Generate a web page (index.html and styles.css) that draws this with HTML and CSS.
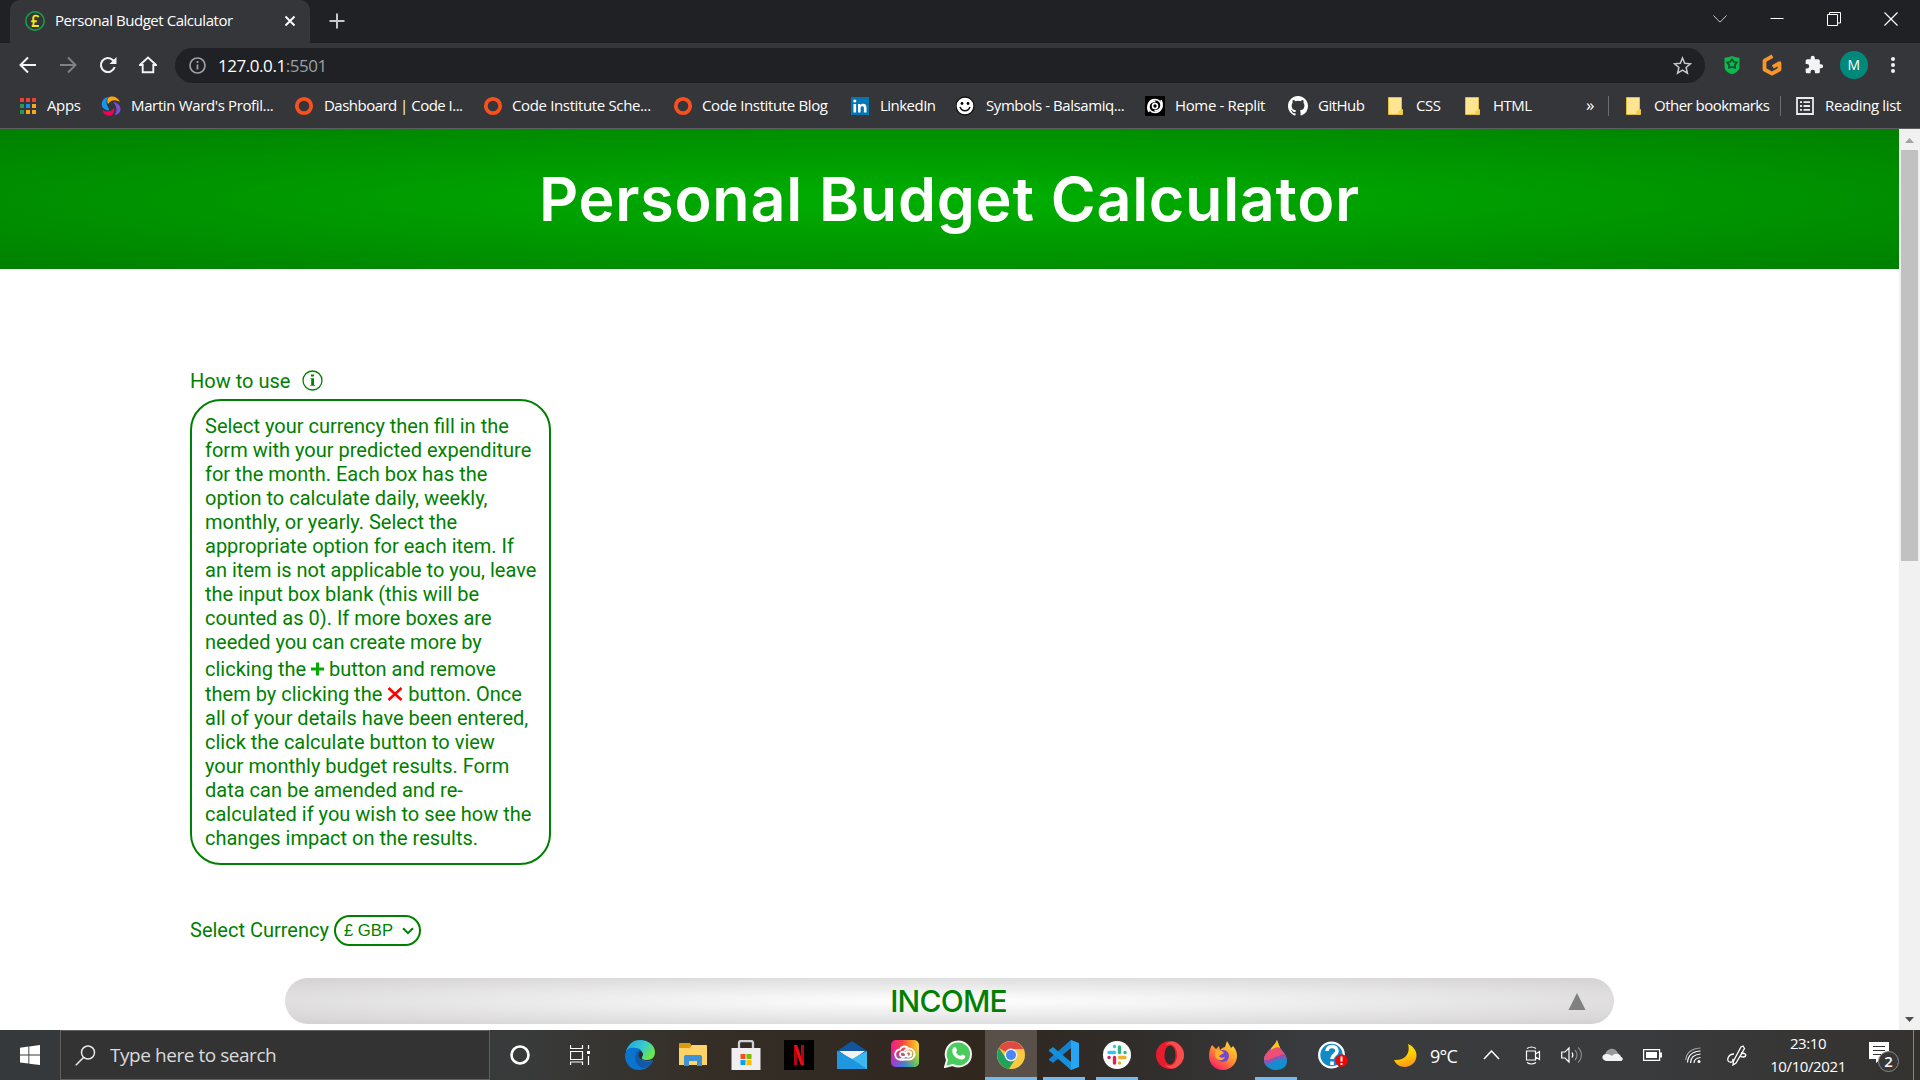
FILE: index.html
```html
<!DOCTYPE html>
<html lang="en">
<head>
<meta charset="utf-8">
<title>Personal Budget Calculator</title>
<link rel="stylesheet" href="styles.css">
</head>
<body>
<svg width="0" height="0" class="defs">
  <defs>
    <symbol id="ring" viewBox="0 0 20 20"><circle cx="10" cy="10" r="7.2" fill="none" stroke="#f9501f" stroke-width="3.8"/></symbol>
    <symbol id="folder" viewBox="0 0 20 20"><path d="M2.5 1.5h13v12h1v5h-14z" fill="#ffe592" stroke="#e3bb3d" stroke-width="1"/><path d="M12.500 18.500v-3.500l3-1.500h1v5z" fill="#f4cd4f"/></symbol>
  </defs>
</svg>
<div class="screen">
  <header class="tabs">
    <div class="tab">
      <svg width="20" height="20" viewBox="0 0 20 20"><circle cx="10" cy="10" r="9.200" fill="none" stroke="#16a34a" stroke-width="1.500"/><path d="M13.500 6.300C12.800 3.900 8.200 3.900 8.200 7.400c0 2 1 4 .2 6.200-.4.900-1 1.400-1.700 1.400h7.200M6.200 10.200h5.600" fill="none" stroke="#f3e90e" stroke-width="1.900"/></svg>
      <span class="tab-title">Personal Budget Calculator</span>
      <svg width="12" height="12" viewBox="0 0 12 12"><path d="M1.500 1.500l9 9M10.500 1.500l-9 9" stroke="#fff" stroke-width="1.900"/></svg>
    </div>
    <svg class="new-tab" width="16" height="16" viewBox="0 0 16 16"><path d="M8 .5v15M.5 8h15" stroke="#c7c8ca" stroke-width="2"/></svg>
    <div class="window-buttons">
      <svg width="14" height="8" viewBox="0 0 14 8"><path d="M.5.5L7 7.200 13.500.5" fill="none" stroke="#c4c4c4" stroke-width="1"/></svg>
      <svg width="14" height="13" viewBox="0 0 14 13"><path d="M.5 6.500h13" stroke="#fff"/></svg>
      <svg width="14" height="14" viewBox="0 0 14 14"><path d="M.5 2.500h10v11H.5zM2.500 2.500v-2h11v10.500h-2.500" fill="none" stroke="#fff"/></svg>
      <svg width="14" height="14" viewBox="0 0 14 14"><path d="M.5.5l13 13M13.500.5l-13 13" stroke="#fff" stroke-width="1.200"/></svg>
    </div>
  </header>

  <nav class="toolbar">
    <div class="nav-icons">
      <svg width="18" height="18" viewBox="0 0 18 18"><path d="M17 9H2M9 1.500L1.500 9 9 16.500" fill="none" stroke="#f1f3f4" stroke-width="2"/></svg>
      <svg width="18" height="18" viewBox="0 0 18 18"><path d="M1 9h15M9 1.500L16.500 9 9 16.500" fill="none" stroke="#7f8184" stroke-width="2"/></svg>
      <svg width="18" height="18" viewBox="0 0 18 18"><path d="M15.600 11A7 7 0 1 1 14 4.200l1.500 1.600" fill="none" stroke="#f1f3f4" stroke-width="2.100"/><path d="M17.500 1v7h-7z" fill="#f1f3f4"/></svg>
      <svg width="18" height="18" viewBox="0 0 18 18"><path d="M.9 9L9 1.500 17.100 9H14.300v7.200H3.700V9z" fill="none" stroke="#f1f3f4" stroke-width="1.900"/></svg>
    </div>
    <div class="omnibox">
      <svg width="17" height="17" viewBox="0 0 17 17"><circle cx="8.500" cy="8.500" r="7.500" fill="none" stroke="#9aa0a6" stroke-width="1.700"/><path d="M8.500 7.500v5M8.500 4v2" stroke="#9aa0a6" stroke-width="1.800"/></svg>
      <span class="url">127.0.0.1<span class="port">:5501</span></span>
      <svg class="star" width="19" height="19" viewBox="0 0 19 19"><path d="M9.500 2l2.200 5.300 5.700.5-4.300 3.700 1.300 5.600-4.900-3-4.900 3 1.300-5.600L1.600 7.800l5.700-.5z" fill="none" stroke="#c6c8ca" stroke-width="1.500"/></svg>
    </div>
    <div class="extensions">
      <svg width="18" height="20" viewBox="0 0 18 20"><path d="M9 1c3 1.200 5 1.600 7.500 1.800v8.700c0 3.800-3 6.200-7.500 7.800-4.500-1.600-7.500-4-7.500-7.800V2.800C4 2.600 6 2.200 9 1z" fill="#0bba4b"/><path d="M9 4.300l1.800 2.400 2.900.8-1.800 2.400.1 3-3-.9-2.900.9v-3L4.300 7.500l3-.8z" fill="none" stroke="#165335" stroke-width="1.800"/></svg>
      <svg width="20" height="22" viewBox="0 0 20 22"><path d="M10.500 2.200L2.500 6.600v8.900l7.500 4.200 7.500-4.200V9.200l-6.700 3.700" fill="none" stroke="#f9962b" stroke-width="3.800" stroke-linejoin="round"/></svg>
      <svg width="20" height="20" viewBox="0 0 24 24"><path fill="#f1f3f4" d="M20.500 11H19V7a2 2 0 0 0-2-2h-4V3.500a2.500 2.500 0 0 0-5 0V5H4a2 2 0 0 0-2 2v3.800h1.500a2.700 2.700 0 0 1 0 5.400H2V20a2 2 0 0 0 2 2h3.800v-1.500a2.700 2.700 0 0 1 5.400 0V22H17a2 2 0 0 0 2-2v-4h1.500a2.500 2.500 0 0 0 0-5z"/></svg>
      <span class="avatar">M</span>
      <svg width="6" height="18" viewBox="0 0 6 18"><g fill="#f1f3f4"><circle cx="3" cy="3" r="2"/><circle cx="3" cy="9" r="2"/><circle cx="3" cy="15" r="2"/></g></svg>
    </div>
  </nav>

  <nav class="bookmarks">
    <a class="bm apps"><svg width="18" height="18" viewBox="0 0 18 18"><path d="M1 1h4v4H1zM7 1h4v4H7zM13 1h4v4h-4z" fill="#ea4335"/><path d="M1 7h4v4H1zM1 13h4v4H1z" fill="#23995a"/><path d="M7 7h4v4H7z" fill="#1a8cf0"/><path d="M13 7h4v4h-4zM7 13h4v4H7zM13 13h4v4h-4z" fill="#f7a81b"/></svg><span>Apps</span></a>
    <a class="bm martin"><svg width="20" height="20" viewBox="0 0 20 20"><path d="M7 1C2 2 0 6 1 10c.5 2.500 2.500 3 4.500 4 2 1 3.500 0 2-2C5.500 9 4.500 5 7 1z" fill="#1496ea"/><path d="M7 2c4-3 10-1 12 4-4-2-8-3-12 2-1-2-1-4 0-6z" fill="#fda50f"/><path d="M12 6c5 .5 8 4 7.500 8-.5 2.500-3 5-5.500 5 2-4 2.500-8-2-13z" fill="#7950d8"/><path d="M1.500 14C6 16.500 10 16 13 12c1 3 0 6-3 7.500-4 .7-8-1.500-8.500-5.500z" fill="#f50057"/></svg><span>Martin Ward's Profil...</span></a>
    <a class="bm dash"><svg width="20" height="20"><use href="#ring"/></svg><span>Dashboard | Code I...</span></a>
    <a class="bm sche"><svg width="20" height="20"><use href="#ring"/></svg><span>Code Institute Sche...</span></a>
    <a class="bm blog"><svg width="20" height="20"><use href="#ring"/></svg><span>Code Institute Blog</span></a>
    <a class="bm linked"><svg width="20" height="20" viewBox="0 0 20 20"><path d="M1 1h18v18H1z" fill="#0277b5"/><path d="M3.500 8h2.600v8.500H3.500zM8 8h2.500v1.200c1.500-2.300 6-1.900 6 2.200v5.100h-2.600v-4.600c0-2.300-3.300-2.200-3.300 0v4.600H8z" fill="#fff"/><circle cx="4.800" cy="5" r="1.600" fill="#fff"/></svg><span>LinkedIn</span></a>
    <a class="bm symb"><svg width="20" height="20" viewBox="0 0 20 20"><circle cx="9" cy="10" r="9" fill="#fff" stroke="#111" stroke-width="1.300"/><path d="M4 11c2 5 8 5 10 0" fill="none" stroke="#111" stroke-width="1.600"/><circle cx="6" cy="7.500" r="1.400"/><circle cx="12" cy="7.500" r="1.400"/></svg><span>Symbols - Balsamiq...</span></a>
    <a class="bm replit"><svg width="20" height="20" viewBox="0 0 20 20"><rect width="20" height="20" rx="1"/><g fill="none" stroke="#fff" stroke-width="1.600"><circle cx="10" cy="10" r="2.500"/><path d="M4 16C1 10 4 3.500 10 3.500c4 0 6.500 3 6 6.500-.4 3-3 5-6.500 4.500M16 4c3 6 0 12.500-6 12.500-4 0-6.500-3-6-6.500.4-3 3-5 6.500-4.500"/></g></svg><span>Home - Replit</span></a>
    <a class="bm github"><svg width="20" height="20" viewBox="0 0 16 16"><path fill="#fff" d="M8 0C3.580 0 0 3.580 0 8c0 3.540 2.290 6.530 5.470 7.590.4.070.55-.17.55-.38v-1.490c-2.010.37-2.530-.49-2.690-.94-.09-.23-.48-.94-.82-1.130-.28-.15-.68-.52-.01-.53.63-.01 1.080.58 1.230.82.720 1.210 1.870.87 2.330.66.070-.52.280-.87.510-1.070-1.780-.2-3.640-.89-3.640-3.950 0-.87.310-1.590.82-2.150-.08-.2-.36-1.020.08-2.120 0 0 .67-.21 2.200.82a7.600 7.600 0 0 1 4 0c1.530-1.040 2.200-.82 2.200-.82.440 1.100.16 1.920.08 2.120.51.560.82 1.270.82 2.150 0 3.070-1.870 3.750-3.650 3.950.29.250.54.730.54 1.480v2.200c0 .21.15.46.55.38A8 8 0 0 0 16 8c0-4.420-3.580-8-8-8z"/></svg><span>GitHub</span></a>
    <a class="bm css"><svg width="20" height="20"><use href="#folder"/></svg><span>CSS</span></a>
    <a class="bm html"><svg width="20" height="20"><use href="#folder"/></svg><span>HTML</span></a>
    <a class="bm more">»</a>
    <a class="bm other"><svg width="20" height="20"><use href="#folder"/></svg><span>Other bookmarks</span></a>
    <a class="bm reading"><svg width="18" height="18" viewBox="0 0 18 18"><path d="M1 1h16v16H1z" fill="none" stroke="#e8eaed" stroke-width="1.800"/><path d="M4 5.200h2M4 9h2M4 12.800h2M7.500 5.200H14M7.500 9H14M7.500 12.800H14" stroke="#e8eaed" stroke-width="1.800"/></svg><span>Reading list</span></a>
  </nav>

  <div class="viewport">
    <main class="page">
      <div class="banner"><h1>Personal Budget Calculator</h1></div>
      <section class="help">
        <div class="how">How to use
          <svg width="21" height="21" viewBox="0 0 21 21"><circle cx="10.500" cy="10.500" r="9.500" fill="none" stroke="green" stroke-width="1.300"/><path d="M8.500 8.300h3.500v6.700h1v.8H8.200V15h1V9.100h-.7z" fill="green"/><path d="M9 4.500h3v2H9z" fill="green"/></svg>
        </div>
        <p class="instructions">Select your currency then fill in the<br>form with your predicted expenditure<br>for the month. Each box has the<br>option to calculate daily, weekly,<br>monthly, or yearly. Select the<br>appropriate option for each item. If<br>an item is not applicable to you, leave<br>the input box blank (this will be<br>counted as 0). If more boxes are<br>needed you can create more by<br><span class="plus-line">clicking the <svg width="13" height="14" viewBox="0 0 13 14"><path d="M6.500 .5v13M0 7h13" stroke="#0a0" stroke-width="3"/></svg> button and remove</span><br><span class="cross-line">them by clicking the <svg width="16" height="14" viewBox="0 0 16 14"><path d="M1.500 1l13 12M14.500 1l-13 12" stroke="red" stroke-width="2.600"/></svg> button. Once</span><br>all of your details have been entered,<br>click the calculate button to view<br>your monthly budget results. Form<br>data can be amended and re-<br>calculated if you wish to see how the<br>changes impact on the results.</p>
        <div class="currency">
          <span>Select Currency</span>
          <div class="select">£ GBP<svg width="12" height="8" viewBox="0 0 12 8"><path d="M1 1.200l5 5 5-5" fill="none" stroke="green" stroke-width="2"/></svg></div>
        </div>
      </section>
      <div class="income"><h2>INCOME</h2><svg width="18" height="17" viewBox="0 0 18 17"><path d="M9 0l8.500 17H.5z" fill="gray"/></svg></div>
    </main>
    <div class="scrollbar">
      <svg width="21" height="21" viewBox="0 0 21 21"><path d="M6 14l4.500-5 4.500 5z" fill="#a3a3a3"/></svg>
      <div class="thumb"></div>
      <svg class="down" width="21" height="21" viewBox="0 0 21 21"><path d="M6 8l4.500 5L15 8z" fill="#505050"/></svg>
    </div>
  </div>

  <footer class="taskbar">
    <div class="start"><svg width="20" height="20" viewBox="0 0 20 20"><path d="M0 2.800l8.400-1.200v8H0zM9.300 1.400L20 0v9.600H9.300zM0 10.500h8.400v8.100L0 17.400zM9.300 10.500H20V20L9.300 18.700z" fill="#fff"/></svg></div>
    <div class="search"><svg width="21" height="21" viewBox="0 0 21 21"><circle cx="13" cy="7.500" r="6.500" fill="none" stroke="#e8e8e8" stroke-width="1.500"/><path d="M8.500 12.500L.8 20.200" stroke="#e8e8e8" stroke-width="1.600"/></svg><span>Type here to search</span></div>
    <div class="task cortana"><svg width="20" height="20" viewBox="0 0 20 20"><circle cx="10" cy="10" r="8.500" fill="none" stroke="#fff" stroke-width="2.600"/></svg></div>
    <div class="task view"><svg width="20" height="20" viewBox="0 0 20 20"><path d="M.5 0v3.500h12V0M.5 6.500h12v8H.5zM.5 20v-3h12v3M18.500 0v4M18.500 11v9" fill="none" stroke="#fff" stroke-width="1.200"/><path d="M17 6h3v3h-3z" fill="#fff"/></svg></div>

    <div class="task"><svg width="30" height="30" viewBox="0 0 30 30"><defs><linearGradient id="e1" x2="1" y2=".5"><stop stop-color="#229fe0"/><stop offset=".6" stop-color="#37cbd0"/><stop offset="1" stop-color="#6be64d"/></linearGradient></defs><path d="M1 11C4 3 9 0 15 0c9 0 15 6 15 12 0 5-3 8-8 8-4 0-6-1.500-5-3 2-3 0-7-4-7z" fill="url(#e1)"/><path d="M0 15C1 8 6 7 11 8c5 0 8 5 6 8-2 2 1 5 5 5 3 0 5-1 6-1-3 7-8 10-14 10C6 30 0 24 0 15z" fill="#0b74cf"/><path d="M10 17c0-4 3-7 5-7 3 2 3 5 2 6-2 3 1 6 6 6 3 0 4-1 5-1-2 5-6 7-9 7-5 0-9-5-9-11z" fill="#125aa9"/><path d="M15 11.500c3 .5 3.500 3 2 5-1 1.500-.5 2.500.5 3.300-2-.3-3.500-2-3.800-3.800-.3-2 .3-3.500 1.300-4.500z" fill="#2f2c27"/></svg></div>
    <div class="task"><svg width="30" height="30" viewBox="0 0 30 30"><path d="M1 4c0-1 .5-1 1-1h10l2 3v5H1z" fill="#dd9b13"/><path d="M1 8h11l2-3h14c.6 0 1 .4 1 1v19H1z" fill="#ffd466"/><path d="M6 26V17c0-1.500 1-2 2-2h14c1 0 2 .5 2 2v9h-5v-5h-8v5z" fill="#3e92d6"/></svg></div>
    <div class="task"><svg width="30" height="30" viewBox="0 0 30 30"><path d="M8 11V3c0-1.500 1-2 2-2h10c1 0 2 .5 2 2v8" fill="none" stroke="#d2cfd2" stroke-width="2.300"/><path d="M.5 8h29v22h-29z" fill="#f0eef0"/><path d="M9.500 14h5v5h-5z" fill="#f25022"/><path d="M15.500 14h5v5h-5z" fill="#7fba00"/><path d="M9.500 20h5v5h-5z" fill="#00a4ef"/><path d="M15.500 20h5v5h-5z" fill="#ffb900"/></svg></div>
    <div class="task"><svg width="30" height="30" viewBox="0 0 30 30"><path d="M0 0h30v30H0z"/><path d="M10 5h3v20l-3 .5zM17 5h3v20.500l-3-.5z" fill="#b1060f"/><path d="M10 5h3.200L20 25.500l-3.300-.5z" fill="#ef0a14"/></svg></div>
    <div class="task"><svg width="30" height="30" viewBox="0 0 30 30"><path d="M0 11L15 1l15 10v6H0z" fill="#12559c"/><path d="M2 11h26L15 20z" fill="#f5f2f4"/><path d="M0 11l15 8 15-8v18H0z" fill="#3cb9f1"/><path d="M0 11l15 8L30 29H0z" fill="#1f97e0"/></svg></div>
    <div class="task"><svg class="cc" width="28" height="28" viewBox="0 0 28 28"><defs><linearGradient id="c1" x2="1" y2="0"><stop stop-color="#f01b8f"/><stop offset=".4" stop-color="#f54545"/><stop offset=".75" stop-color="#fb9b26"/><stop offset="1" stop-color="#f5d936"/></linearGradient><linearGradient id="c2" x2="1" y2="0"><stop stop-color="#8f3df0"/><stop offset=".5" stop-color="#1e8dea"/><stop offset="1" stop-color="#43d44c"/></linearGradient><linearGradient id="c3" x2="0" y2="1"><stop offset=".3" stop-color="#fff" stop-opacity="0"/><stop offset="1" stop-color="#fff"/></linearGradient><mask id="cm"><path d="M0 0h28v28H0z" fill="url(#c3)"/></mask></defs><rect width="28" height="27" rx="5" fill="url(#c1)"/><rect width="28" height="27" rx="5" fill="url(#c2)" mask="url(#cm)"/><g fill="none" stroke="#fff" stroke-width="1.900" stroke-linecap="round"><path d="M9.500 19.500H18a5.500 5.500 0 1 0-4-9.200"/><path d="M13 19.500H9.500a5 5 0 0 1-.6-10C10.500 6 15 5.500 17.500 8.500"/><circle cx="17.500" cy="14" r="2.700"/><path d="M14.500 16.300c-2.500 1.500-5.500.5-5.500-2s3-3.500 5-1.500l2 2"/></g></svg></div>
    <div class="task"><svg class="wa" width="28" height="28" viewBox="0 0 28 28"><path d="M1 27l2-7C-1 11 5 1.500 14.500 1.500 21 1.500 27 7 27 14c0 10-10 15-18.500 11z" fill="#4acb5d" stroke="#f5f5f5" stroke-width="2"/><path d="M9 8c2-2 3-1 4 2 0 1-1 2-1 2 1 2 2 3 4.500 4l1.500-1.500c2 .5 4 1 3 3-3 6-16-2-12-9.500z" fill="#fff"/></svg></div>
    <div class="task active running"><svg width="28" height="28" viewBox="0 0 28 28"><circle cx="14" cy="14" r="14" fill="#fbc842"/><path d="M14 14L2 7C8-2 21-2 26.500 8H14z" fill="#df4c3f"/><path d="M2 7a14 14 0 0 0 10 20.800l7-10.800L14 20 9 17z" fill="#1fa35c"/><circle cx="14" cy="14" r="6.500" fill="#eee"/><circle cx="14" cy="14" r="5" fill="#4b86f5"/></svg></div>
    <div class="task running"><svg width="30" height="30" viewBox="0 0 30 30"><path fill-rule="evenodd" d="M22 0l8 3v24l-8 3-10-11 10 3V8l-10 3z" fill="#27a5f2"/><path d="M22 0v8L4 23 0 20v-1z" fill="#1681ce"/><path d="M22 30v-8L4 7 0 10v1z" fill="#1590dc"/></svg></div>
    <div class="task running"><svg width="28" height="28" viewBox="0 0 28 28"><circle cx="14" cy="14" r="14" fill="#fff"/><g stroke-width="3.400" stroke-linecap="round" fill="none"><path d="M6 11.500h5.500M11.500 5.500v.1" stroke="#36c5f0"/><path d="M16.500 6v5.500M22 11.500h.1" stroke="#2eb67d"/><path d="M16.500 16.500H22M16.500 22v.1" stroke="#ecb22e"/><path d="M11.500 16.500V22M6 16.500h.1" stroke="#e01e5a"/></g></svg></div>
    <div class="task"><svg width="28" height="28" viewBox="0 0 28 28"><circle cx="14" cy="14" r="14" fill="#e81c2c"/><path d="M9 24c3 3 7 4.500 11 2.500 5-3 8-7.500 8-12.500S25 4.500 20 1.500C16-.5 12 1 9 4c9-3 12 4 12 10S18 27 9 24z" fill="#f5504e"/><ellipse cx="14" cy="14" rx="5.500" ry="9.500" fill="#302c29"/></svg></div>
    <div class="task"><svg width="28" height="29" viewBox="0 0 28 29"><defs><linearGradient id="f" x1=".9" y1="0" x2=".2" y2="1"><stop stop-color="#ffe637"/><stop offset=".5" stop-color="#ff922d"/><stop offset="1" stop-color="#f9176b"/></linearGradient></defs><path d="M3 4l4 4 3-3 1 4c2-2 4-3 5-3l2-6 4 7 2-2c3 3 4 7 4 10 0 7-6 14-14 14S0 23 0 15c0-4 1-8 3-11z" fill="url(#f)"/><circle cx="14" cy="15" r="6" fill="#7648cd"/><path d="M7 9c4 0 7 1 8 3l-5 3c1 2 3 2 6 1-3 7-13 2-9-7z" fill="#ffae2f"/></svg></div>
    <div class="task running"><svg width="24" height="30" viewBox="0 0 24 30"><defs><clipPath id="d"><path d="M13 0l3 8c4 5 7 8 7 13 0 6-5 9-11 9S0 26 0 20C0 12 10 8 13 0z"/></clipPath></defs><g clip-path="url(#d)"><path d="M0 0h24v30H0z" fill="#168dce"/><path d="M0 5h24v15C16 15 8 24 0 25z" fill="#8457b9"/><path d="M0 0h24v14C16 13 9 20 0 20z" fill="#ee4e76"/><path d="M8 0h8v8c-3-2-6 0-9 2z" fill="#f6c915"/></g></svg></div>
    <div class="task help-app"><svg width="30" height="28" viewBox="0 0 30 28"><circle cx="13.500" cy="14" r="12.300" fill="#118ac8" stroke="#fff" stroke-width="2.300"/><path d="M9 10c0-6 10-6 10 0 0 4-5 3.500-5 8M14 20.500V24" fill="none" stroke="#fff" stroke-width="3.600"/><circle cx="23.500" cy="19.500" r="6.300" fill="#f20505"/><path d="M23.500 15.500v5M23.500 22v2" stroke="#fff" stroke-width="2"/></svg></div>

    <div class="tray">
      <svg class="moon" width="23" height="23" viewBox="0 0 23 23"><defs><linearGradient id="m" x2=".3" y2="1"><stop stop-color="#ffe400"/><stop offset=".6" stop-color="#ffd000"/><stop offset="1" stop-color="#ff9c18"/></linearGradient></defs><path d="M14 0c10 4 11 15 4 20.500C12 25 3 23 0 16c10 1 17-6 14-16z" fill="url(#m)"/></svg>
      <span class="temp">9°C</span>
      <svg class="chev" width="17" height="10" viewBox="0 0 17 10"><path d="M1 9l7.500-8L16 9" fill="none" stroke="#fff" stroke-width="1.500"/></svg>
      <svg class="cam" width="16" height="19" viewBox="0 0 16 19"><path d="M1.500 5h9v9h-9zM10.500 8l4-2.500v8l-4-2.500M2 2.500C5 .5 8 .5 11 2.500M2 16.500c3 2 6 2 9 0" fill="none" stroke="#fff" stroke-width="1.200"/></svg>
      <svg class="snd" width="22" height="18" viewBox="0 0 22 18"><path d="M.7 6H4l4-4v14l-4-4H.7z" fill="none" stroke="#fff" stroke-width="1.200"/><path d="M11 6.500c1 1.500 1 3.500 0 5" fill="none" stroke="#fff" stroke-width="1.200"/><path d="M14 4c2.500 3 2.500 7 0 10M17 1.500c4.500 4 4.500 11 0 15" fill="none" stroke="#888" stroke-width="1.200"/></svg>
      <svg class="cloud" width="21" height="14" viewBox="0 0 21 14"><path d="M3 7c1-7 10-9 13-2l2 3-8 3z" fill="#999"/><path d="M4 13c-5-1-5-7 1-7 2 0 4 1 5 2 3-4 9-2 9 1 3 1 2 4-1 4z" fill="#f3f3f3"/></svg>
      <svg class="bat" width="19" height="12" viewBox="0 0 19 12"><path d="M.6.6h16v10.800H.6z" fill="none" stroke="#fff" stroke-width="1.200"/><path d="M3 3h11v6H3zM17 3.500h2v5h-2z" fill="#fff"/></svg>
      <svg class="wifi" width="16" height="17" viewBox="0 0 16 17"><g fill="none" stroke="#fff" stroke-width="1.200"><path d="M9 16c0-3 2-5 6.500-5.500M5.500 16C5.500 10.500 9 7.500 15.500 7M2.500 15.500C3 8.500 7 4.500 15.500 4" /><path d="M.6 13C1.500 6 7 1.500 15.500 1" stroke="#aaa"/></g><circle cx="14" cy="14.500" r="1.500" fill="#fff"/></svg>
      <svg class="pen" width="20" height="21" viewBox="0 0 20 21"><path d="M16 1l1.500 2.500L9 18l-3 2 .5-4L14 2zM7 9c-6 0-8 7-4.500 8 3 1 4-2 3-3M14 8c6 0 6 4 2 4-3 0-3-2-1-3" fill="none" stroke="#fff" stroke-width="1.300"/></svg>
      <div class="clock"><span>23:10</span><span>10/10/2021</span></div>
      <svg class="notif" width="32" height="32" viewBox="0 0 32 32"><path d="M1 1h20v17H13l-5 4v-4H1z" fill="#fff"/><path d="M5 5.500h12M5 9.500h12M5 13.500h8" stroke="#333" stroke-width="1.200"/><circle cx="20.500" cy="20.500" r="10" fill="#393735" stroke="#8a8a8a"/><text x="20.500" y="26" text-anchor="middle" class="count">2</text></svg>
    </div>
  </footer>
</div>
</body>
</html>
```

FILE: styles.css
```css
* { box-sizing: border-box; }
html, body { margin: 0; height: 100%; overflow: hidden; }
body { font-family: "Open Sans", "Noto Sans", sans-serif; background: #fff; }
svg { display: block; flex: none; }
.defs { position: absolute; }
.screen { width: 1920px; height: 1080px; display: flex; flex-direction: column; }

/* tab strip */
.tabs { height: 43px; background: #202124; display: flex; align-items: flex-start; padding-left: 10px; flex: none; }
.tab { width: 300px; height: 43px; background: #35363a; border-radius: 10px 10px 0 0; display: flex; align-items: center; padding: 0 14px 2px 15px; }
.tab-title { flex: 1; margin-left: 10px; padding-bottom: 1px; color: #fff; font-size: 15px; letter-spacing: -0.45px; white-space: nowrap; }
.new-tab { margin: 13px 0 0 19px; }
.window-buttons { margin-left: auto; display: flex; align-items: center; height: 37px; gap: 43px; padding-right: 22px; }

/* toolbar */
.toolbar { height: 45px; background: #35363a; display: flex; align-items: center; flex: none; padding-bottom: 1px; }
.nav-icons { display: flex; gap: 22px; padding-left: 19px; width: 175px; }
.omnibox { width: 1530px; height: 35px; background: #202124; border-radius: 18px; display: flex; align-items: center; padding: 0 13px 0 14px; }
.url { flex: 1; margin-left: 12px; color: #fff; font-size: 17px; letter-spacing: -0.45px; }
.port { color: #9aa0a6; }
.extensions { flex: 1; display: flex; align-items: center; padding: 0 24px 0 18px; justify-content: space-between; }
.avatar { width: 28px; height: 28px; border-radius: 50%; background: #00897b; color: #fff; font-size: 14px; line-height: 28px; text-align: center; margin: 0 1px 0 -5px; }

/* bookmarks bar */
.bookmarks { height: 41px; background: #35363a; border-bottom: 1px solid #5d5e62; display: grid; grid-template-columns: 82px 193px 189px 190px 177px 106px 189px 143px 98px 77px 123px 22px 172px 1fr; padding: 0 0 5px 19px; align-items: center; flex: none; }
.bm { display: flex; align-items: center; gap: 10px; color: #fff; font-size: 15px; letter-spacing: -0.36px; white-space: nowrap; height: 20px; }
.bm span { padding-bottom: 1px; }
.dash, .linked, .css, .html, .other, .github { letter-spacing: -0.52px; }
.sche, .blog { gap: 9px; }
.symb { letter-spacing: -0.43px; }
.other, .reading { border-left: 1px solid #6b6c70; padding-left: 15px; }
.reading { gap: 11px; }
.more { font-size: 17px; padding-bottom: 3px; }

/* page */
.viewport { height: 901px; display: flex; flex: none; overflow: hidden; }
.page { width: 1899px; background: #fff; color: green; font-family: Roboto, sans-serif; font-size: 20px; }
.banner { height: 140px; background: radial-gradient(#00b000, green); display: flex; align-items: center; justify-content: center; }
h1 { margin: 0; color: #fff; font: 600 61px Inter, sans-serif; letter-spacing: 0.72px; white-space: nowrap; }
.help { padding: 99px 0 0 190px; height: 709px; }
.how { display: flex; align-items: center; gap: 12px; height: 26px; line-height: 26px; }
.how svg { margin-bottom: 2px; }
.instructions { margin: 5px 0 0; width: 361px; height: 466px; border: 2px solid green; border-radius: 31px; padding: 13px 0 0 13px; line-height: 24px; white-space: nowrap; }
.instructions svg { display: inline-block; }
.plus-line { display: inline-block; height: 27px; padding-top: 3px; vertical-align: top; }
.cross-line { display: inline-block; height: 25px; padding-top: 1px; vertical-align: top; }
.currency { display: flex; align-items: center; gap: 5px; margin-top: 50px; height: 31px; }
.currency span { margin-bottom: 2px; }
.select { width: 87px; height: 31px; border: 2px solid green; border-radius: 16px; display: flex; align-items: center; justify-content: space-between; padding: 0 5px 0 8px; font: 16.67px "Liberation Sans", sans-serif; }
.income { width: 1329px; height: 46px; margin-left: 285px; border-radius: 25px; background: radial-gradient(#fff, #d3d1d1); display: grid; grid-template-columns: 1fr auto 1fr; align-items: center; }
h2 { grid-column: 2; margin: 0 2px 1px 0; font: 500 30px Inter, sans-serif; letter-spacing: -0.8px; }
.income svg { justify-self: end; margin-right: 28px; }
.scrollbar { width: 21px; background: #f1f1f1; display: flex; flex-direction: column; align-items: center; }
.thumb { width: 17px; height: 411px; background: #c1c1c1; }
.down { margin-top: auto; }

/* taskbar */
.taskbar { height: 50px; flex: none; display: flex; background: linear-gradient(90deg, #36393b 0, #393b3b 27%, #342e26 37%, #30271f 51%, #302d2a 59%, #393b3e 68%, #3a3b3d 85%, #34322f 100%); color: #fff; }
.start { width: 60px; display: flex; align-items: center; justify-content: center; }
.search { width: 430px; background: #333; border: 1px solid #606060; display: flex; align-items: center; gap: 14px; padding: 0 0 0 14px; color: #dadada; font-size: 19px; letter-spacing: -0.45px; }
.task { width: 53px; height: 50px; display: flex; align-items: center; justify-content: center; }
.task .cc, .task .wa { margin-bottom: 2px; }
.cortana, .view { width: 60px; }
.view { margin-right: 3px; }
.running { background: linear-gradient(#76b9ed, #76b9ed) bottom / 42px 3px no-repeat; }
.active { background: linear-gradient(#76b9ed, #76b9ed) bottom / 52px 3px no-repeat, linear-gradient(#5a504a, #5a504a) center / 52px 50px no-repeat; }
.help-app { width: 61px; }
.tray { flex: 1; display: flex; align-items: center; padding-left: 31px; }
.temp { margin: 1px 0 0 13px; width: 53px; font-size: 18px; letter-spacing: -0.7px; }
.chev { margin-right: 25px; }
.cam { margin-right: 20px; }
.snd { margin-right: 19px; }
.cloud { margin-right: 20px; }
.bat { margin-right: 23px; }
.wifi { margin-right: 26px; }
.pen { margin-right: 16px; }
.clock { width: 90px; display: flex; flex-direction: column; align-items: center; font-size: 15px; line-height: 23px; letter-spacing: -0.4px; padding-bottom: 1px; }
.notif { margin: 3px 13px 0 15px; }
.count { font-size: 15px; font-weight: 600; fill: #fff; }
.tray::after { content: ""; width: 1px; height: 50px; background: #85878a; }
```
